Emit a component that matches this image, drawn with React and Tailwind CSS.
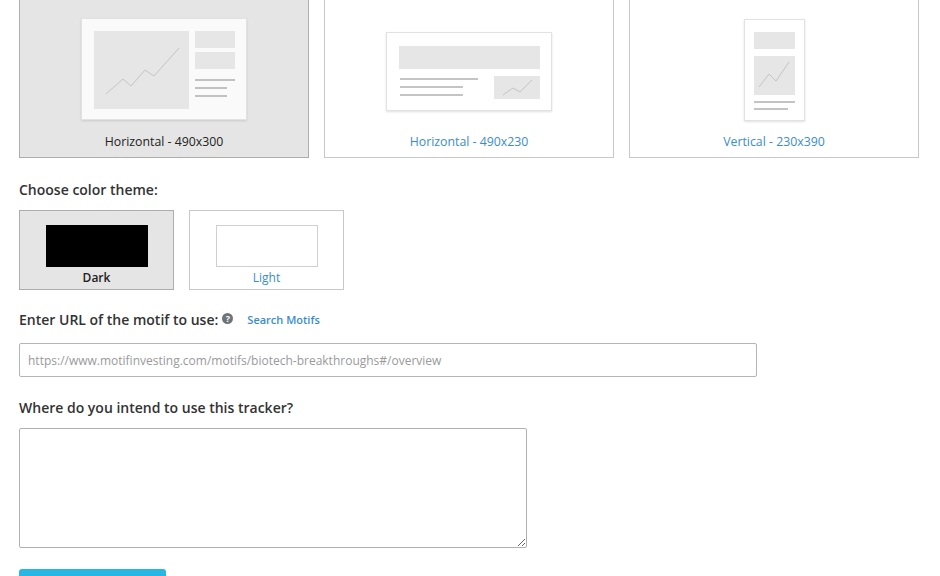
import React from "react";

const BLOCK = "#e6e6e6";
const LINE = "#8a8a8a";
const CHART = "#c4c4c4";

function Thumb1() {
  return (
    <div className="bg-[#fafafa] border border-[#e2e2e2] shadow-[0_1px_2px_rgba(0,0,0,0.12)]">
      <svg width="164" height="100" viewBox="1 1 164 100" className="block">
        <rect x="13" y="13" width="95" height="78" fill={BLOCK} />
        <polyline points="25,76 42,61 50,68 64,52 73,58 98,30" fill="none" stroke={CHART} strokeWidth="1" />
        <rect x="114" y="13" width="40" height="17" fill={BLOCK} />
        <rect x="114" y="34" width="40" height="17" fill={BLOCK} />
        <rect x="114" y="61.5" width="40" height="1" fill={LINE} />
        <rect x="114" y="69.5" width="32" height="1" fill={LINE} />
        <rect x="114" y="77.5" width="32" height="1" fill={LINE} />
      </svg>
    </div>
  );
}

function Thumb2() {
  return (
    <div className="bg-white border border-[#e2e2e2] shadow-[0_1px_2px_rgba(0,0,0,0.12)]">
      <svg width="164" height="77" viewBox="1 1 164 77" className="block">
        <rect x="13" y="14" width="141" height="23" fill={BLOCK} />
        <rect x="14" y="46.5" width="78" height="1" fill={LINE} />
        <rect x="14" y="54.5" width="63" height="1" fill={LINE} />
        <rect x="14" y="62.5" width="63" height="1" fill={LINE} />
        <rect x="108" y="44" width="46" height="23" fill={BLOCK} />
        <polyline points="117,63 127,56 134,60 146,48" fill="none" stroke={CHART} strokeWidth="1" />
      </svg>
    </div>
  );
}

function Thumb3() {
  return (
    <div className="bg-white border border-[#e2e2e2] shadow-[0_1px_2px_rgba(0,0,0,0.12)]">
      <svg width="59" height="100" viewBox="1 1 59 100" className="block">
        <rect x="10" y="13" width="41" height="17" fill={BLOCK} />
        <rect x="10" y="37" width="41" height="39" fill={BLOCK} />
        <polyline points="15,68 25,55 32,62 45,43" fill="none" stroke={CHART} strokeWidth="1" />
        <rect x="10" y="82.5" width="41" height="1" fill={LINE} />
        <rect x="10" y="89.5" width="34" height="1" fill={LINE} />
      </svg>
    </div>
  );
}

function LayoutCard({ selected, label, thumb, mt }) {
  return (
    <div
      className={
        "w-[290px] h-[160px] flex flex-col items-center border " +
        (selected ? "bg-[#e5e5e5] border-[#adadad]" : "bg-white border-[#c8c8c8]")
      }
    >
      <div className={mt}>{thumb}</div>
      <div
        className={
          "mt-auto pb-[7px] leading-[16px] text-[12.3px] " +
          (selected ? "text-[#222]" : "text-[#3a8dcc]")
        }
      >
        {label}
      </div>
    </div>
  );
}

export default function App() {
  return (
    <div
      className="w-[940px] h-[576px] overflow-hidden bg-white pl-[19px] text-[#333]"
      style={{ fontFamily: '"Open Sans", "Liberation Sans", sans-serif' }}
    >
      <div className="flex gap-[15px] -mt-[2px]">
        <LayoutCard selected label="Horizontal - 490x300" thumb={<Thumb1 />} mt="mt-[19px]" />
        <LayoutCard label="Horizontal - 490x230" thumb={<Thumb2 />} mt="mt-[33px]" />
        <LayoutCard label="Vertical - 230x390" thumb={<Thumb3 />} mt="mt-[20px]" />
      </div>

      <div className="mt-[22px] text-[14px] leading-[20px] font-semibold text-[#333]">
        Choose color theme:
      </div>

      <div className="flex gap-[15px] mt-[10px]">
        <div className="w-[155px] h-[80px] bg-[#e5e5e5] border border-[#adadad] flex flex-col items-center">
          <div className="mt-[14px] w-[102px] h-[42px] bg-black" />
          <div className="mt-auto pb-[3px] text-[12px] leading-[16px] font-semibold text-[#222]">Dark</div>
        </div>
        <div className="w-[155px] h-[80px] bg-white border border-[#c8c8c8] flex flex-col items-center">
          <div className="mt-[14px] w-[102px] h-[42px] bg-white border border-[#cfcfcf]" />
          <div className="mt-auto pb-[3px] text-[12px] leading-[16px] text-[#3a8dcc]">Light</div>
        </div>
      </div>

      <div className="mt-[20px] flex items-center h-[20px]">
        <span className="text-[14px] leading-[20px] font-semibold text-[#333]">Enter URL of the motif to use:</span>
        <span className="ml-[4px] w-[11px] h-[11px] rounded-full bg-[#6f7478] text-white text-[9px] leading-[11px] font-bold flex items-center justify-center -mt-[3px]">
          ?
        </span>
        <span className="ml-[14px] text-[11px] font-semibold text-[#3a8dcc]">Search Motifs</span>
      </div>

      <input
        className="mt-[13px] block w-[738px] h-[34px] border border-[#b5b5b5] rounded-[2px] px-[8px] text-[12px] text-[#333] placeholder:text-[#9a9a9a] outline-none"
        style={{ fontFamily: '"Open Sans", "Liberation Sans", sans-serif' }}
        placeholder="https://www.motifinvesting.com/motifs/biotech-breakthroughs#/overview"
      />

      <div className="mt-[21px] text-[14px] leading-[20px] font-semibold text-[#333]">
        Where do you intend to use this tracker?
      </div>

      <textarea className="mt-[10px] block w-[508px] h-[120px] border border-[#b0b0b0] rounded-[2px] outline-none resize" />

      <div className="mt-[21px] w-[147px] h-[36px] bg-[#27b7e5] rounded-[3px]" />
    </div>
  );
}
